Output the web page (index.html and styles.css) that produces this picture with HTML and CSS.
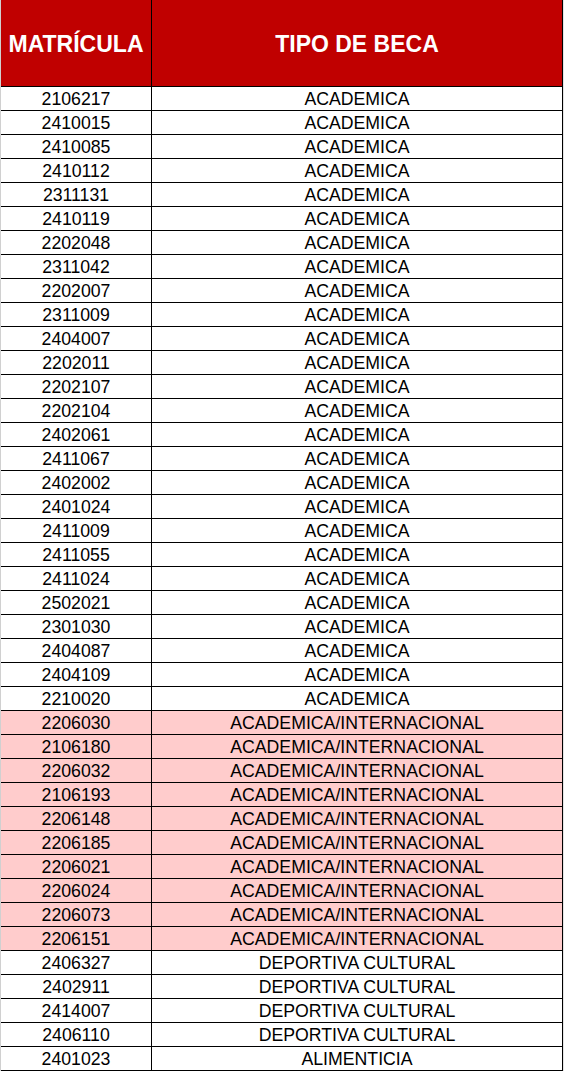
FILE: index.html
```html
<!DOCTYPE html>
<html lang="es">
<head>
<meta charset="utf-8">
<title>Becas</title>
<link rel="stylesheet" href="styles.css">
</head>
<body>
<div class="sheet">
  <div class="row head">
    <div class="cell c1">MATRÍCULA</div>
    <div class="cell c2">TIPO DE BECA</div>
  </div>
  <div class="row"><div class="cell c1">2106217</div><div class="cell c2">ACADEMICA</div></div>
  <div class="row"><div class="cell c1">2410015</div><div class="cell c2">ACADEMICA</div></div>
  <div class="row"><div class="cell c1">2410085</div><div class="cell c2">ACADEMICA</div></div>
  <div class="row"><div class="cell c1">2410112</div><div class="cell c2">ACADEMICA</div></div>
  <div class="row"><div class="cell c1">2311131</div><div class="cell c2">ACADEMICA</div></div>
  <div class="row"><div class="cell c1">2410119</div><div class="cell c2">ACADEMICA</div></div>
  <div class="row"><div class="cell c1">2202048</div><div class="cell c2">ACADEMICA</div></div>
  <div class="row"><div class="cell c1">2311042</div><div class="cell c2">ACADEMICA</div></div>
  <div class="row"><div class="cell c1">2202007</div><div class="cell c2">ACADEMICA</div></div>
  <div class="row"><div class="cell c1">2311009</div><div class="cell c2">ACADEMICA</div></div>
  <div class="row"><div class="cell c1">2404007</div><div class="cell c2">ACADEMICA</div></div>
  <div class="row"><div class="cell c1">2202011</div><div class="cell c2">ACADEMICA</div></div>
  <div class="row"><div class="cell c1">2202107</div><div class="cell c2">ACADEMICA</div></div>
  <div class="row"><div class="cell c1">2202104</div><div class="cell c2">ACADEMICA</div></div>
  <div class="row"><div class="cell c1">2402061</div><div class="cell c2">ACADEMICA</div></div>
  <div class="row"><div class="cell c1">2411067</div><div class="cell c2">ACADEMICA</div></div>
  <div class="row"><div class="cell c1">2402002</div><div class="cell c2">ACADEMICA</div></div>
  <div class="row"><div class="cell c1">2401024</div><div class="cell c2">ACADEMICA</div></div>
  <div class="row"><div class="cell c1">2411009</div><div class="cell c2">ACADEMICA</div></div>
  <div class="row"><div class="cell c1">2411055</div><div class="cell c2">ACADEMICA</div></div>
  <div class="row"><div class="cell c1">2411024</div><div class="cell c2">ACADEMICA</div></div>
  <div class="row"><div class="cell c1">2502021</div><div class="cell c2">ACADEMICA</div></div>
  <div class="row"><div class="cell c1">2301030</div><div class="cell c2">ACADEMICA</div></div>
  <div class="row"><div class="cell c1">2404087</div><div class="cell c2">ACADEMICA</div></div>
  <div class="row"><div class="cell c1">2404109</div><div class="cell c2">ACADEMICA</div></div>
  <div class="row"><div class="cell c1">2210020</div><div class="cell c2">ACADEMICA</div></div>
  <div class="row pink"><div class="cell c1">2206030</div><div class="cell c2">ACADEMICA/INTERNACIONAL</div></div>
  <div class="row pink"><div class="cell c1">2106180</div><div class="cell c2">ACADEMICA/INTERNACIONAL</div></div>
  <div class="row pink"><div class="cell c1">2206032</div><div class="cell c2">ACADEMICA/INTERNACIONAL</div></div>
  <div class="row pink"><div class="cell c1">2106193</div><div class="cell c2">ACADEMICA/INTERNACIONAL</div></div>
  <div class="row pink"><div class="cell c1">2206148</div><div class="cell c2">ACADEMICA/INTERNACIONAL</div></div>
  <div class="row pink"><div class="cell c1">2206185</div><div class="cell c2">ACADEMICA/INTERNACIONAL</div></div>
  <div class="row pink"><div class="cell c1">2206021</div><div class="cell c2">ACADEMICA/INTERNACIONAL</div></div>
  <div class="row pink"><div class="cell c1">2206024</div><div class="cell c2">ACADEMICA/INTERNACIONAL</div></div>
  <div class="row pink"><div class="cell c1">2206073</div><div class="cell c2">ACADEMICA/INTERNACIONAL</div></div>
  <div class="row pink"><div class="cell c1">2206151</div><div class="cell c2">ACADEMICA/INTERNACIONAL</div></div>
  <div class="row"><div class="cell c1">2406327</div><div class="cell c2">DEPORTIVA CULTURAL</div></div>
  <div class="row"><div class="cell c1">2402911</div><div class="cell c2">DEPORTIVA CULTURAL</div></div>
  <div class="row"><div class="cell c1">2414007</div><div class="cell c2">DEPORTIVA CULTURAL</div></div>
  <div class="row"><div class="cell c1">2406110</div><div class="cell c2">DEPORTIVA CULTURAL</div></div>
  <div class="row"><div class="cell c1">2401023</div><div class="cell c2">ALIMENTICIA</div></div>
</div>
</body>
</html>
```
FILE: styles.css
```css
html, body {
  margin: 0;
  padding: 0;
  background: #ffffff;
}
.sheet {
  width: 564px;
  box-sizing: border-box;
  border-left: 1px solid #d0d0d0;
  border-right: 1px solid #e4e4e4;
  font-family: "Liberation Sans", Arial, sans-serif;
  color: #000000;
}
.row {
  display: grid;
  grid-template-columns: 151px 411px;
  height: 24px;
  box-sizing: border-box;
  border-bottom: 1px solid #000000;
  background: #ffffff;
}
.row.pink {
  background: #ffcccc;
}
.cell {
  display: flex;
  align-items: center;
  justify-content: center;
  border-right: 1px solid #000000;
  font-size: 17.7px;
  line-height: 1;
  white-space: nowrap;
  padding-top: 3px;
  box-sizing: border-box;
}
.head {
  height: 87px;
  background: #c00000;
}
.head .cell {
  color: #ffffff;
  font-weight: bold;
  font-size: 23px;
  padding-top: 2px;
}
```
